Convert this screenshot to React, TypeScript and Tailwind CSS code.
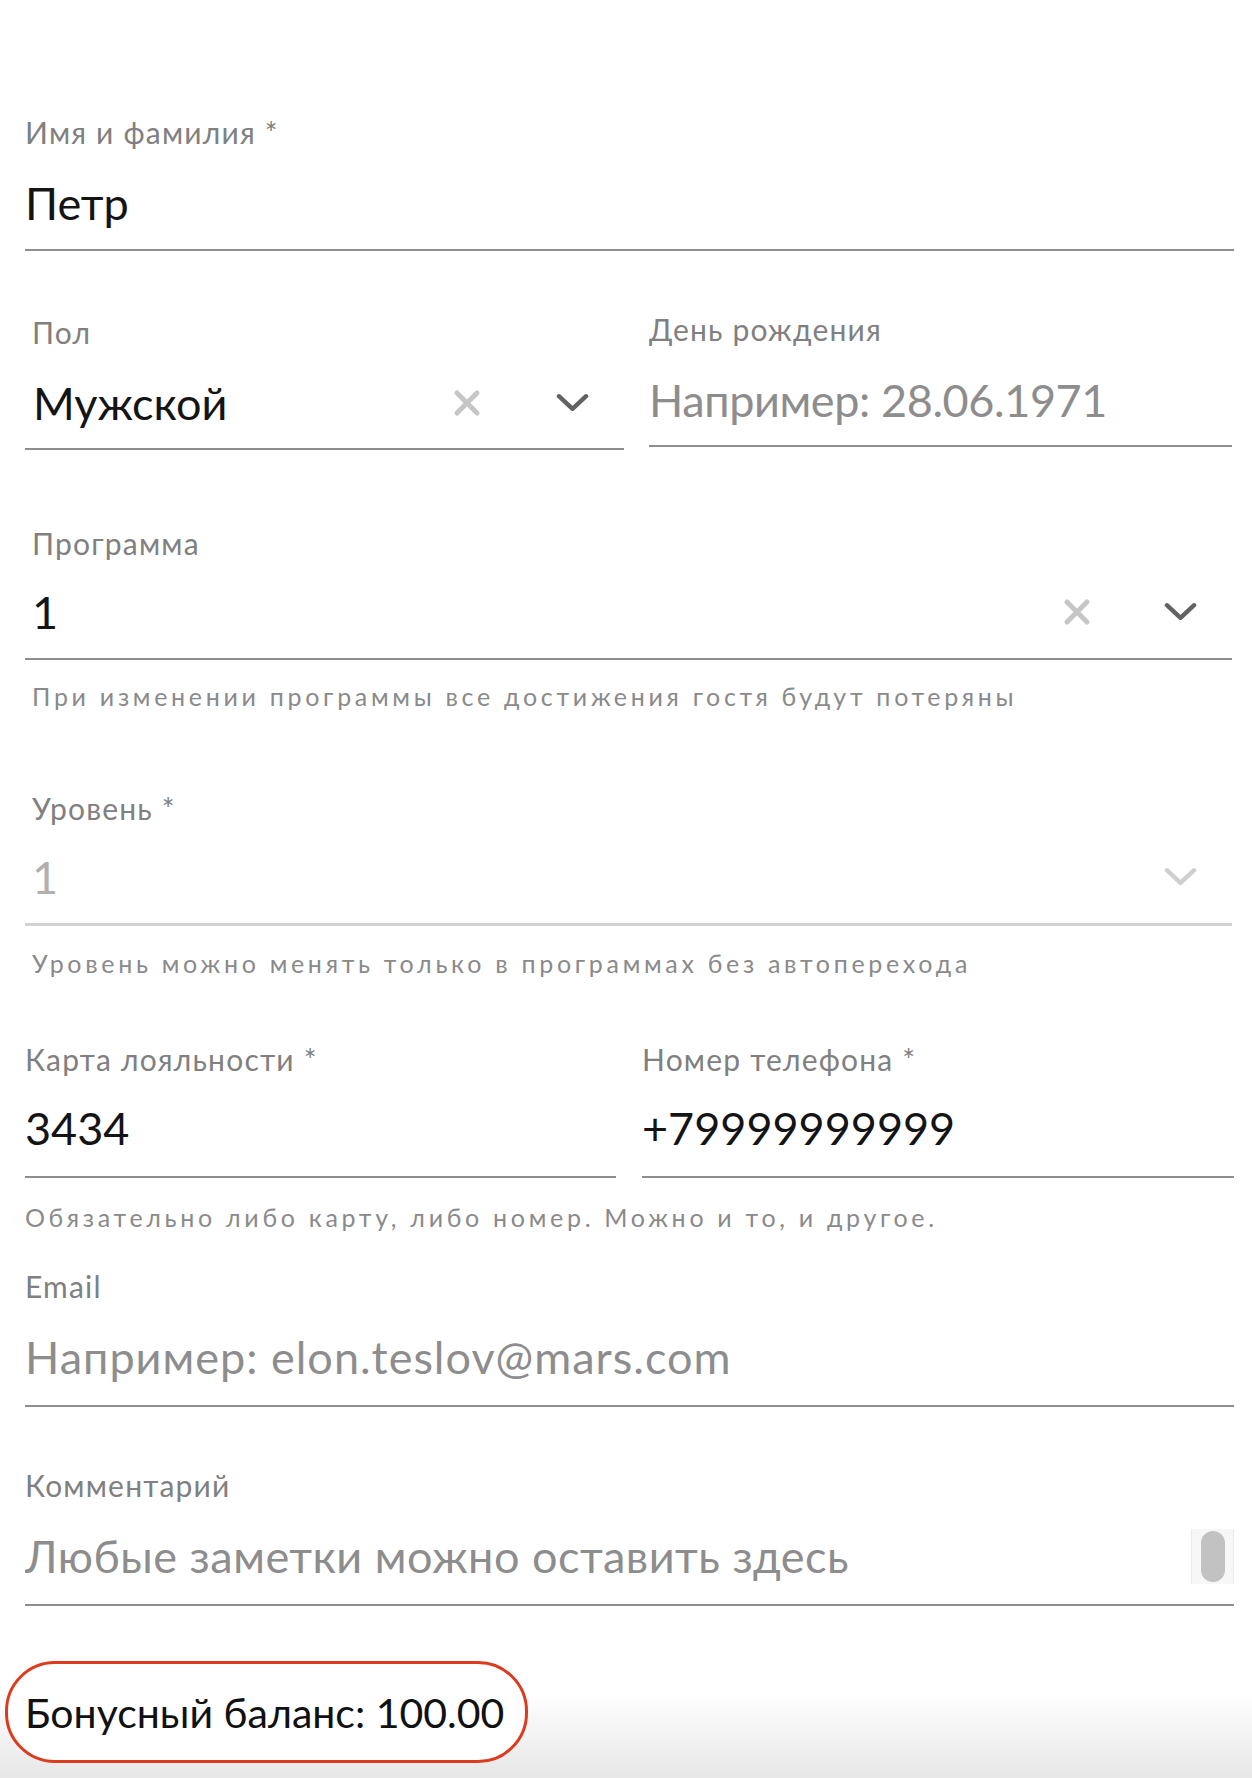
import type { ReactNode } from "react";

function XIcon() {
  return (
    <svg viewBox="0 0 28 28" className="w-[28px] h-[28px] text-[#c6c6c6]" fill="none" stroke="currentColor" strokeWidth="5" strokeLinecap="round">
      <path d="M4 4L24 24M24 4L4 24" />
    </svg>
  );
}

function Chevron({ light }: { light?: boolean }) {
  return (
    <svg
      viewBox="0 0 34 20"
      className={light ? "w-[33px] h-[20px] text-[#cfcfcf]" : "w-[33px] h-[20px] text-[#626262]"}
      fill="none"
      stroke="currentColor"
      strokeWidth="4.5"
      strokeLinecap="round"
      strokeLinejoin="round"
    >
      <path d="M3 3L17 16L31 3" />
    </svg>
  );
}

function Label({ children }: { children: ReactNode }) {
  return <div className="h-[36px] leading-[34px] text-[30px] text-[#808080] tracking-[1.2px]">{children}</div>;
}

function Hint({ children }: { children: ReactNode }) {
  return <div className="h-[30px] leading-[30px] text-[25px] text-[#8a8a8a] tracking-[3.7px]">{children}</div>;
}

function Value({ children, muted }: { children: ReactNode; muted?: "placeholder" | "disabled" }) {
  const color = muted === "placeholder" ? "text-[#8d8d8d]" : muted === "disabled" ? "text-[#b0b0b0]" : "text-[#141414]";
  return <div className={`h-[56px] leading-[56px] text-[45px] ${color} truncate`}>{children}</div>;
}

export default function App() {
  return (
    <div className="min-h-[1778px] bg-white font-['Lato',sans-serif] flex flex-col">
      <div className="pl-[25px] pr-[18px] pt-[115px] flex flex-col">
        {/* Имя */}
        <div className="border-b-2 border-[#8e8e8e] pb-[18px]">
          <Label>Имя и фамилия *</Label>
          <div className="mt-[24px]">
            <Value>Петр</Value>
          </div>
        </div>

        {/* Пол / День рождения */}
        <div className="mt-[61px] flex gap-[25px] items-start">
          <div className="w-[599px] pt-[3px] border-b-2 border-[#8e8e8e] pb-[17px]">
            <div className="pl-[7px]">
              <Label>Пол</Label>
            </div>
            <div className="mt-[24px] pl-[8px] pr-[35px] flex items-center">
              <div className="flex-1">
                <Value>Мужской</Value>
              </div>
              <XIcon />
              <div className="w-[108px] flex justify-end">
                <Chevron />
              </div>
            </div>
          </div>
          <div className="flex-1 mr-[2px] border-b-2 border-[#8e8e8e] pb-[17px]">
            <Label>День рождения</Label>
            <div className="mt-[24px]">
              <Value muted="placeholder">
                <span className="tracking-[-0.4px]">Например: 28.06.1971</span>
              </Value>
            </div>
          </div>
        </div>

        {/* Программа */}
        <div className="mt-[76px] mr-[2px] border-b-2 border-[#8e8e8e] pb-[18px]">
          <div className="pl-[7px]">
            <Label>Программа</Label>
          </div>
          <div className="mt-[22px] pl-[7px] pr-[35px] flex items-center">
            <div className="flex-1">
              <Value>1</Value>
            </div>
            <XIcon />
            <div className="w-[106px] flex justify-end">
              <Chevron />
            </div>
          </div>
        </div>
        <div className="mt-[21px] pl-[7px]">
          <Hint>При изменении программы все достижения гостя будут потеряны</Hint>
        </div>

        {/* Уровень */}
        <div className="mt-[80px] mr-[2px] border-b-[3px] border-[#d2d2d2] pb-[18px]">
          <div className="pl-[7px]">
            <Label>Уровень *</Label>
          </div>
          <div className="mt-[22px] pl-[7px] pr-[35px] flex items-center">
            <div className="flex-1">
              <Value muted="disabled">1</Value>
            </div>
            <Chevron light />
          </div>
        </div>
        <div className="mt-[22px] pl-[7px]">
          <Hint>Уровень можно менять только в программах без автоперехода</Hint>
        </div>

        {/* Карта / Телефон */}
        <div className="mt-[64px] flex gap-[26px]">
          <div className="w-[591px] border-b-2 border-[#8e8e8e] pb-[20px]">
            <Label>Карта лояльности *</Label>
            <div className="mt-[22px]">
              <Value>3434</Value>
            </div>
          </div>
          <div className="flex-1 border-b-2 border-[#8e8e8e] pb-[20px]">
            <Label>Номер телефона *</Label>
            <div className="mt-[22px]">
              <Value>+79999999999</Value>
            </div>
          </div>
        </div>
        <div className="mt-[24px]">
          <Hint>Обязательно либо карту, либо номер. Можно и то, и другое.</Hint>
        </div>

        {/* Email */}
        <div className="mt-[37px] border-b-2 border-[#8e8e8e] pb-[20px]">
          <Label>Email</Label>
          <div className="mt-[24px]">
            <Value muted="placeholder">
              <span className="tracking-[1px]">Например: elon.teslov@mars.com</span>
            </Value>
          </div>
        </div>

        {/* Комментарий */}
        <div className="mt-[61px] border-b-2 border-[#8e8e8e] pb-[20px]">
          <Label>Комментарий</Label>
          <div className="mt-[24px] flex items-center">
            <div className="flex-1">
              <Value muted="placeholder">
                <span className="tracking-[0.5px]">Любые заметки можно оставить здесь</span>
              </Value>
            </div>
            <div className="w-[43px] h-[55px] bg-[#f7f7f7] border-x border-[#ebebeb] flex items-center justify-center">
              <div className="w-[24px] h-[51px] rounded-full bg-[#c2c2c2]" />
            </div>
          </div>
        </div>
      </div>

      {/* Бонусный баланс */}
      <div className="flex-1 pt-[55px] pb-[14px] bg-[linear-gradient(to_bottom,#ffffff_50%,#e7e7e7)]">
        <div className="ml-[5px] w-[523px] h-[102px] rounded-[50px] border-[3px] border-[#dc3b1e] bg-white pl-[17px] flex items-center">
          <span className="text-[41px] text-[#111] leading-none">Бонусный баланс: 100.00</span>
        </div>
      </div>
    </div>
  );
}
